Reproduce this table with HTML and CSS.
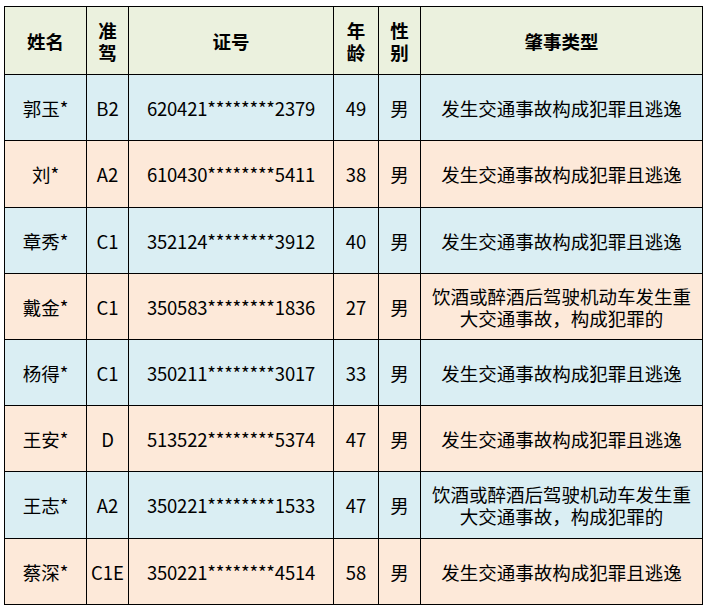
FILE: index.html
```html
<!DOCTYPE html>
<html lang="zh-CN">
<head>
<meta charset="utf-8">
<link rel="stylesheet" href="styles.css">
</head>
<body>
<table class="tbl">
  <colgroup>
    <col class="c-name"><col class="c-lic"><col class="c-id"><col class="c-age"><col class="c-sex"><col class="c-type">
  </colgroup>
  <thead>
    <tr class="head">
      <th>姓名</th><th>准<br>驾</th><th>证号</th><th>年<br>龄</th><th>性<br>别</th><th>肇事类型</th>
    </tr>
  </thead>
  <tbody>
    <tr class="blue r66"><td>郭玉*</td><td>B2</td><td class="id">620421********2379</td><td>49</td><td>男</td><td>发生交通事故构成犯罪且逃逸</td></tr>
    <tr class="peach r67"><td>刘*</td><td>A2</td><td class="id">610430********5411</td><td>38</td><td>男</td><td>发生交通事故构成犯罪且逃逸</td></tr>
    <tr class="blue r66"><td>章秀*</td><td>C1</td><td class="id">352124********3912</td><td>40</td><td>男</td><td>发生交通事故构成犯罪且逃逸</td></tr>
    <tr class="peach r66"><td>戴金*</td><td>C1</td><td class="id">350583********1836</td><td>27</td><td>男</td><td class="two">饮酒或醉酒后驾驶机动车发生重<br>大交通事故，构成犯罪的</td></tr>
    <tr class="blue r66"><td>杨得*</td><td>C1</td><td class="id">350211********3017</td><td>33</td><td>男</td><td>发生交通事故构成犯罪且逃逸</td></tr>
    <tr class="peach r66"><td>王安*</td><td>D</td><td class="id">513522********5374</td><td>47</td><td>男</td><td>发生交通事故构成犯罪且逃逸</td></tr>
    <tr class="blue r67"><td>王志*</td><td>A2</td><td class="id">350221********1533</td><td>47</td><td>男</td><td class="two">饮酒或醉酒后驾驶机动车发生重<br>大交通事故，构成犯罪的</td></tr>
    <tr class="peach r66"><td>蔡深*</td><td>C1E</td><td class="id">350221********4514</td><td>58</td><td>男</td><td>发生交通事故构成犯罪且逃逸</td></tr>
  </tbody>
</table>
</body>
</html>
```

FILE: styles.css
```css
html, body {
  margin: 0;
  padding: 0;
  background: #ffffff;
}
body {
  padding: 6px 0 0 4px;
  font-family: "Noto Sans CJK SC", "Noto Sans", sans-serif;
  color: #000;
}
.tbl {
  border-collapse: collapse;
  table-layout: fixed;
  width: 699px;
  font-size: 18.5px;
}
.c-name { width: 82px; }
.c-lic { width: 42px; }
.c-id { width: 205px; }
.c-age { width: 45px; }
.c-sex { width: 42px; }
.c-type { width: 282px; }
.tbl th, .tbl td {
  border: 1px solid #000;
  padding: 0;
  text-align: center;
  vertical-align: middle;
  line-height: 22px;
  white-space: nowrap;
}
.tbl th {
  font-weight: bold;
}
.head {
  height: 68px;
  background: #ebf1de;
}
.blue { background: #daeef3; }
.peach { background: #fde9d9; }
.r66 { height: 66px; }
.r67 { height: 67px; }
.tbl td.id { letter-spacing: -0.2px; }
.tbl td.two { line-height: 22px; }
```
